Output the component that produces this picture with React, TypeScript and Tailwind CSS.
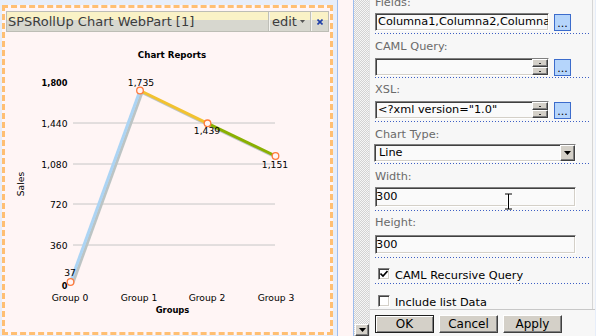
import React from "react";

const font = "font-['DejaVu_Sans',Verdana,sans-serif]";
const inset =
  "border border-t-[#808080] border-l-[#808080] border-b-white border-r-white shadow-[inset_1px_1px_0_#404040,inset_-1px_-1px_0_#d4d0c8]";
const raised =
  "border border-t-white border-l-white border-b-[#404040] border-r-[#404040] shadow-[inset_-1px_-1px_0_#808080] bg-[#d4d0c8]";

const Divider = () => (
  <div className="h-px w-[214px] bg-[linear-gradient(to_right,#3d5fc4_1px,transparent_1px)] bg-[length:3px_1px]" />
);

const Browse = () => (
  <div className="w-[17px] h-[17px] bg-[#b5d5fb] border border-[#3c6ccc] flex items-end justify-center text-[11px] leading-[13px] text-black">
    ...
  </div>
);

const Spinner = () => (
  <div className="flex flex-col w-[16px] h-full ml-auto">
    <div className={`flex-1 ${raised} flex items-center justify-center`}>
      <div className="w-[2px] h-px bg-[#303030]" />
    </div>
    <div className={`flex-1 ${raised} flex items-center justify-center`}>
      <div className="w-[2px] h-px bg-[#303030]" />
    </div>
  </div>
);

const Label = ({ text, mt }: { text: string; mt: string }) => (
  <div className={`${mt} leading-[14px] text-[11.3px] text-[#6a6a6a]`}>{text}</div>
);

const Check = ({ checked }: { checked?: boolean }) => (
  <div className={`w-[12px] h-[12px] ${inset} bg-white flex items-center justify-center`}>
    {checked && (
      <svg width="8" height="8" viewBox="0 0 8 8">
        <path d="M0.5 3.5 L3 6 L7.5 1" stroke="#000" strokeWidth="1.6" fill="none" />
      </svg>
    )}
  </div>
);

const Chart = () => {
  const pts = [
    [69.5, 282],
    [139, 90.5],
    [206.5, 123.3],
    [274.5, 156],
  ];
  const colors = ["#acd4f4", "#f2c230", "#8ab000"];
  const tick = "9.2px";
  return (
    <svg width="325" height="300" viewBox="5 32 325 300" className="block">
      <text x="171" y="55" textAnchor="middle" dominantBaseline="central" fontSize="8.7" fontWeight="bold" fill="#000">
        Chart Reports
      </text>
      {[123, 164, 204, 245].map((y) => (
        <line key={y} x1="72" x2="274" y1={y} y2={y} stroke="#c6c6c6" strokeWidth="1" />
      ))}
      {[
        ["1,800", 83, true],
        ["1,440", 123, false],
        ["1,080", 164, false],
        ["720", 204, false],
        ["360", 245, false],
        ["0", 286, true],
      ].map(([t, y, b]) => (
        <text
          key={t as string}
          x="66.5"
          y={y as number}
          textAnchor="end"
          dominantBaseline="central"
          fontSize={b ? "8.2" : tick}
          fontWeight={b ? "bold" : "normal"}
          fill="#000"
        >
          {t}
        </text>
      ))}
      <text
        x="19"
        y="184"
        transform="rotate(-90 19 184)"
        textAnchor="middle"
        dominantBaseline="central"
        fontSize={tick}
        fill="#000"
      >
        Sales
      </text>
      {pts.slice(0, 3).map((p, i) => (
        <line
          key={"s" + i}
          x1={p[0] + 2}
          y1={p[1] + 2}
          x2={pts[i + 1][0] + 2}
          y2={pts[i + 1][1] + 2}
          stroke="#bcc4c4"
          strokeWidth="3"
        />
      ))}
      {pts.slice(0, 3).map((p, i) => (
        <line
          key={"l" + i}
          x1={p[0]}
          y1={p[1]}
          x2={pts[i + 1][0]}
          y2={pts[i + 1][1]}
          stroke={colors[i]}
          strokeWidth="3"
        />
      ))}
      {pts.map((p, i) => (
        <circle key={"c" + i} cx={p[0]} cy={p[1]} r="3.3" fill="#fff5f5" stroke="#ff7a3c" strokeWidth="1.3" />
      ))}
      {[
        ["37", 69, 272.5],
        ["1,735", 140, 82.5],
        ["1,439", 206, 130.5],
        ["1,151", 274, 164],
      ].map(([t, x, y]) => (
        <text key={t as string} x={x as number} y={y as number} textAnchor="middle" dominantBaseline="central" fontSize={tick} fill="#000">
          {t}
        </text>
      ))}
      {["Group 0", "Group 1", "Group 2", "Group 3"].map((g, i) => (
        <text key={g} x={[69, 138, 206, 275][i]} y="297" textAnchor="middle" dominantBaseline="central" fontSize={tick} fill="#000">
          {g}
        </text>
      ))}
      <text x="171.5" y="310" textAnchor="middle" dominantBaseline="central" fontSize="8.4" fontWeight="bold" fill="#000">
        Groups
      </text>
    </svg>
  );
};

export default function App() {
  return (
    <div className={`${font} w-[596px] h-[336px] flex overflow-hidden bg-[#e7eefa]`}>
      {/* web part zone */}
      <div className="w-[338px] h-full pl-[2px] pt-[5px] border-r border-[#9dbdee]">
        <div className="w-[331px] h-[330px] border-[3px] border-dashed border-[#ffbf73] bg-[#fff5f5] pt-[3px] px-px">
          <div className="h-[21px] flex border border-[#bdbdb5] bg-[linear-gradient(#faf2c6_0,#faf2c6_42%,#d7d7cf_42%)] text-[13px] text-[#3c3c3c]">
            <div className="flex-1 pl-[1px] leading-[19px]">SPSRollUp Chart WebPart [1]</div>
            <div className="w-[42px] flex items-center pl-[3px] border-l border-[#bfbfb8] shadow-[inset_1px_0_0_#f4f4f0] leading-[19px]">
              edit
              <svg width="5" height="3" viewBox="0 0 5 3" className="ml-[3px]">
                <path d="M0 0 H5 L2.5 3 Z" fill="#555" />
              </svg>
            </div>
            <div className="w-[18px] flex items-center justify-center border-l border-[#bfbfb8] shadow-[inset_1px_0_0_#f4f4f0]">
              <svg width="6" height="6" viewBox="0 0 6 6">
                <path d="M0.5 0.5 L5.5 5.5 M5.5 0.5 L0.5 5.5" stroke="#1f3fa8" strokeWidth="1.6" />
              </svg>
            </div>
          </div>
          <Chart />
        </div>
      </div>
      {/* gap strip */}
      <div className="w-[16px] h-full bg-[#fff5f5] border-r border-[#9dbdee]" />
      {/* scrollbar track */}
      <div className="w-[15px] h-full flex flex-col justify-end bg-[repeating-conic-gradient(#d2d2d2_0_25%,#f6f6f6_0_50%)] bg-[length:2px_2px]">
        <div className={`h-[12px] w-[14px] ml-px ${raised} flex items-center justify-center`}>
          <svg width="7" height="4" viewBox="0 0 7 4">
            <path d="M0 0 H7 L3.5 4 Z" fill="#000" />
          </svg>
        </div>
      </div>
      {/* tool pane */}
      <div className="w-[226px] h-full flex flex-col bg-[#f7f7f7] border-l border-[#e2e2e2] text-black">
        <div className="relative h-[309px] overflow-hidden pl-[5px] border-r border-[#d6d6d6] mr-[2px]">
          <Label text="Fields:" mt="-mt-[4px]" />
          <div className="mt-[3px] flex items-center gap-[5px] h-[18px]">
            <div className={`w-[174px] h-[18px] ${inset} bg-[#fafafa] overflow-hidden whitespace-nowrap text-[11.3px] leading-[15px] pl-[2px]`}>
              Columna1,Columna2,Columna3
            </div>
            <Browse />
          </div>
          <div className="mt-[2px]">
            <Divider />
          </div>
          <Label text="CAML Query:" mt="mt-[6px]" />
          <div className="mt-[4px] flex items-center gap-[5px] h-[18px]">
            <div className={`w-[174px] h-[18px] ${inset} bg-[#fafafa] flex`}>
              <Spinner />
            </div>
            <Browse />
          </div>
          <div className="mt-px">
            <Divider />
          </div>
          <Label text="XSL:" mt="mt-[5px]" />
          <div className="mt-[4px] flex items-center gap-[5px] h-[18px]">
            <div className={`w-[174px] h-[18px] ${inset} bg-[#fafafa] flex items-center`}>
              <span className="pl-[2px] text-[11.3px] leading-[14px] whitespace-nowrap">&lt;?xml version="1.0"</span>
              <Spinner />
            </div>
            <Browse />
          </div>
          <div className="mt-[2px]">
            <Divider />
          </div>
          <Label text="Chart Type:" mt="mt-[6px]" />
          <div className={`mt-[2px] -ml-px w-[202px] h-[18px] ${inset} bg-[#fafafa] flex items-center`}>
            <span className="pl-[4px] text-[11.3px] leading-[14px]">Line</span>
            <div className={`ml-auto w-[15px] h-full ${raised} flex items-center justify-center`}>
              <svg width="7" height="4" viewBox="0 0 7 4">
                <path d="M0 0 H7 L3.5 4 Z" fill="#000" />
              </svg>
            </div>
          </div>
          <div className="mt-px">
            <Divider />
          </div>
          <Label text="Width:" mt="mt-[6px]" />
          <div className={`mt-[3px] w-[201px] h-[20px] ${inset} bg-[#fafafa] flex items-center text-[11.3px] leading-[14px]`}>
            300
          </div>
          <div className="mt-[3px]">
            <Divider />
          </div>
          <Label text="Height:" mt="mt-[5px]" />
          <div className={`mt-[5px] w-[201px] h-[19px] ${inset} bg-[#fafafa] flex items-center text-[11.3px] leading-[14px]`}>
            300
          </div>
          <div className="mt-[3px]">
            <Divider />
          </div>
          <div className="mt-[10px] h-[13px] flex items-start gap-[5px] pl-[3px]">
            <Check checked />
            <span className="mt-px text-[11.3px] leading-[14px]">CAML Recursive Query</span>
          </div>
          <div className="mt-[2px]">
            <Divider />
          </div>
          <div className="mt-[11px] h-[13px] flex items-start gap-[5px] pl-[3px]">
            <Check />
            <span className="mt-px text-[11.3px] leading-[14px]">Include list Data</span>
          </div>
          {/* mouse I-beam */}
          <svg width="9" height="17" viewBox="0 0 9 17" className="absolute left-[134px] top-[193px]">
            <path d="M1 1 H8 M4.5 1 V16 M1 16 H8" stroke="#fff" strokeWidth="3" />
            <path d="M1 1 H8 M4.5 1 V16 M1 16 H8" stroke="#000" strokeWidth="1" />
          </svg>
        </div>
        <div className="flex-1 border-t border-[#c8c8c8] pt-[5px] pl-[5px] flex gap-[5px] text-[12px]">
          <div className="w-[59px] h-[18px] border border-[#202020] bg-[#d4d0c8] shadow-[inset_1px_1px_0_#fff,inset_-1px_-1px_0_#808080] flex items-center justify-center">
            OK
          </div>
          <div className={`w-[59px] h-[18px] ${raised} flex items-center justify-center`}>Cancel</div>
          <div className={`w-[59px] h-[18px] ${raised} flex items-center justify-center`}>Apply</div>
        </div>
      </div>
    </div>
  );
}
